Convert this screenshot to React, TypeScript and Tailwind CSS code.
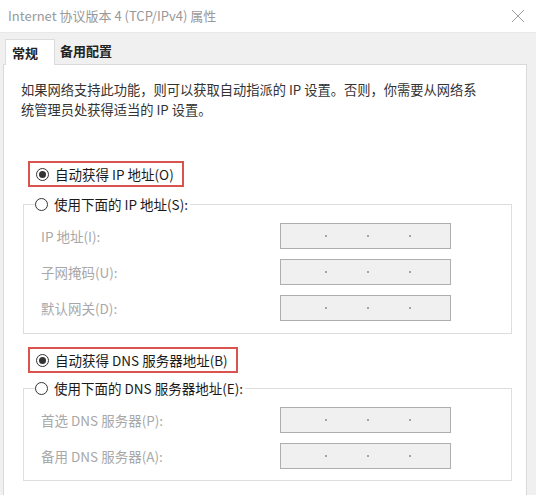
import type React from 'react';

function Radio({ checked }: { checked?: boolean }) {
  return (
    <span className="w-[13px] h-[13px] rounded-full border border-[#333] bg-white flex items-center justify-center shrink-0">
      {checked && <span className="w-[7px] h-[7px] rounded-full bg-[#333]" />}
    </span>
  );
}

function IpField() {
  return (
    <div className="w-[171px] h-[26px] bg-[#f0f0f0] border border-[#aeaeae] flex items-center pl-[44px]">
      <span className="w-[2px] h-[2px] rounded-full bg-[#8c8c8c]" />
      <span className="w-[40px]" />
      <span className="w-[2px] h-[2px] rounded-full bg-[#8c8c8c]" />
      <span className="w-[40px]" />
      <span className="w-[2px] h-[2px] rounded-full bg-[#8c8c8c]" />
    </div>
  );
}

function FieldRow({ label }: { label: string }) {
  return (
    <div className="h-[26px] flex items-center">
      <span className="w-[256px] pl-[17px] text-[#a8a8a8]">{label}</span>
      <IpField />
    </div>
  );
}

function AutoOption({ label, className }: { label: string; className?: string }) {
  return (
    <div
      className={`ml-[24px] self-start h-[26px] border-2 border-[#d9534f] flex items-center pl-[6px] pr-[8px] gap-[6px] text-[#1a1a1a] ${className ?? ''}`}
    >
      <Radio checked />
      <span>{label}</span>
    </div>
  );
}

function Group({
  legend,
  rows,
  className,
  children,
}: {
  legend: string;
  rows: string[];
  className?: string;
  children?: React.ReactNode;
}) {
  return (
    <fieldset className={`ml-[19px] w-[489px] border border-[#dedede] ${className ?? ''}`}>
      <legend className="ml-[11px] h-[20px] flex items-center gap-[6px] text-[#1a1a1a]">
        <Radio />
        <span className="pr-[2px]">{legend}</span>
      </legend>
      <div className="flex flex-col gap-[10px] mt-[9px]">
        {rows.map((r) => (
          <FieldRow key={r} label={r} />
        ))}
      </div>
      {children}
    </fieldset>
  );
}

export default function App() {
  return (
    <div className="w-[536px] h-[495px] overflow-hidden bg-white font-['Noto_Sans_CJK_SC',sans-serif] text-[13.5px] leading-[20px]">
      <div className="h-[32px] flex items-center justify-between pl-[8px] pr-[10px]">
        <span className="text-[13px] text-[#999]">Internet 协议版本 4 (TCP/IPv4) 属性</span>
        <svg width="14" height="14" viewBox="0 0 14 14" className="mr-[1px]">
          <path d="M1 1 L13 13 M13 1 L1 13" stroke="#a0a0a0" strokeWidth="1" />
        </svg>
      </div>

      <div className="h-[463px] bg-[#f0f0f0] border-t border-[#e8e8e8] flex flex-col pl-[3px] pr-[9px]">
        <div className="h-[31px] flex items-end text-[13px] font-bold text-[#222]">
          <div className="ml-[2px] w-[50px] h-[26px] bg-white border border-b-0 border-[#dcdcdc] pl-[6px] flex items-center -mb-px relative">
            常规
          </div>
          <div className="ml-[5px] h-[26px] flex items-center">备用配置</div>
        </div>

        <div className="flex-1 bg-white border border-b-0 border-[#d9d9d9] flex flex-col">
          <p className="ml-[17px] w-[465px] mt-[15px] text-[13.25px] text-[#333]">
            如果网络支持此功能，则可以获取自动指派的 IP 设置。否则，你需要从网络系统管理员处获得适当的 IP 设置。
          </p>

          <AutoOption label="自动获得 IP 地址(O)" className="mt-[41px] h-[25px]" />

          <Group
            legend="使用下面的 IP 地址(S):"
            rows={['IP 地址(I):', '子网掩码(U):', '默认网关(D):']}
            className="mt-[7px] pb-[12px]"
          />

          <AutoOption label="自动获得 DNS 服务器地址(B)" className="mt-[13px]" />

          <Group
            legend="使用下面的 DNS 服务器地址(E):"
            rows={['首选 DNS 服务器(P):', '备用 DNS 服务器(A):']}
            className="mt-[5px] pb-[11px]"
          />
        </div>
      </div>
    </div>
  );
}
